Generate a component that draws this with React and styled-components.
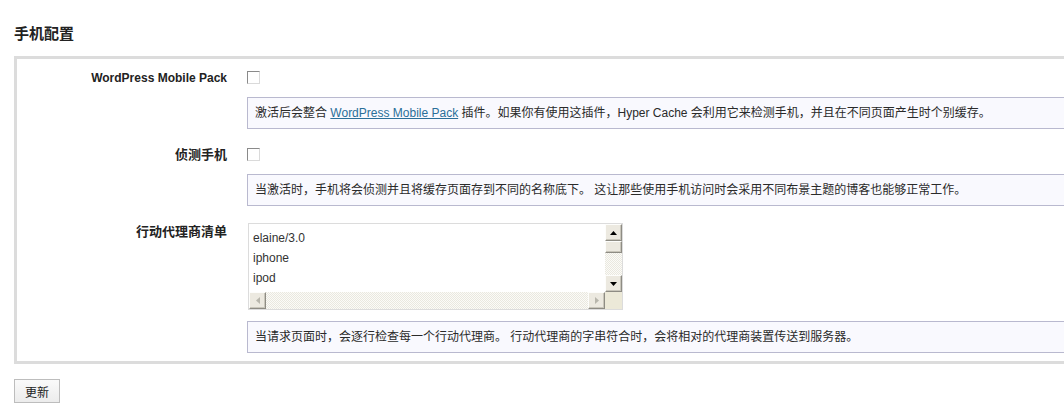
import React from "react";
import styled, { createGlobalStyle } from "styled-components";

const GlobalStyle = createGlobalStyle`
  html, body {
    margin: 0;
    padding: 0;
    background: #fff;
    overflow: hidden;
  }
  body {
    font-family: "Liberation Sans", Arial, "Noto Sans CJK SC", sans-serif;
    color: #333;
  }
`;

const agents = ["elaine/3.0", "iphone", "ipod"];

const Arrow = ({ dir, muted }) => {
  const pts = {
    up: "0,4 7,4 3.5,0",
    down: "0,0 7,0 3.5,4",
    left: "4,0 4,7 0,3.5",
    right: "0,0 0,7 4,3.5",
  }[dir];
  const vertical = dir === "up" || dir === "down";
  return (
    <svg width={vertical ? 7 : 4} height={vertical ? 4 : 7} viewBox={vertical ? "0 0 7 4" : "0 0 4 7"}>
      <polygon points={pts} fill={muted ? "#b8b6ac" : "#000"} />
    </svg>
  );
};

const App = () => {
  return (
    <>
      <GlobalStyle />
      <Page>
        <Title>手机配置</Title>
        <Panel>
          <Row>
            <Label>WordPress Mobile Pack</Label>
            <Field>
              <Check type="checkbox" />
              <Note>
                激活后会整合 <NoteLink href="#">WordPress Mobile Pack</NoteLink> 插件。如果你有使用这插件，Hyper Cache 会利用它来检测手机，并且在不同页面产生时个别缓存。
              </Note>
            </Field>
          </Row>
          <Row>
            <Label $cjk>侦测手机</Label>
            <Field>
              <Check type="checkbox" />
              <Note>当激活时，手机将会侦测并且将缓存页面存到不同的名称底下。 这让那些使用手机访问时会采用不同布景主题的博客也能够正常工作。</Note>
            </Field>
          </Row>
          <Row>
            <Label $cjk>行动代理商清单</Label>
            <Field>
              <ListBox>
                <ListText>
                  {agents.map((a) => (
                    <div key={a}>{a}</div>
                  ))}
                </ListText>
                <VBar>
                  <ScrollBtn>
                    <Arrow dir="up" />
                  </ScrollBtn>
                  <Thumb />
                  <Track />
                  <ScrollBtn>
                    <Arrow dir="down" />
                  </ScrollBtn>
                </VBar>
                <HBar>
                  <ScrollBtn>
                    <Arrow dir="left" muted />
                  </ScrollBtn>
                  <Track />
                  <ScrollBtn>
                    <Arrow dir="right" muted />
                  </ScrollBtn>
                </HBar>
                <Corner />
              </ListBox>
              <Note>当请求页面时，会逐行检查每一个行动代理商。 行动代理商的字串符合时，会将相对的代理商装置传送到服务器。</Note>
            </Field>
          </Row>
        </Panel>
        <Button>更新</Button>
      </Page>
    </>
  );
};

export default App;

const Page = styled.div`
  padding: 23px 0 0 14px;
`;

const Title = styled.h2`
  margin: 0 0 13px;
  font-size: 15px;
  line-height: 20px;
  font-weight: bold;
  color: #222;
  font-family: "Noto Sans CJK SC", sans-serif;
`;

const Panel = styled.div`
  width: 1100px;
  border: 3px solid #dcdcdc;
  background: #fff;
  padding: 10px 0 8px;
  display: flex;
  flex-direction: column;
  gap: 17px;
`;

const Row = styled.div`
  display: grid;
  grid-template-columns: 210px 1fr;
  column-gap: 20px;
`;

const Label = styled.div`
  text-align: right;
  font-weight: bold;
  font-size: ${(p) => (p.$cjk ? "13px" : "12px")};
  line-height: 16px;
  padding-top: ${(p) => (p.$cjk ? "0" : "1px")};
  color: #222;
  font-family: ${(p) =>
    p.$cjk ? '"Noto Sans CJK SC", sans-serif' : '"Liberation Sans", Arial, sans-serif'};
`;

const Field = styled.div`
  display: flex;
  flex-direction: column;
  align-items: flex-start;
`;

const Check = styled.input`
  appearance: none;
  width: 13px;
  height: 13px;
  margin: 2px 0 13px;
  background: #fff;
  border: 1px solid;
  border-color: #8a8a8a #dadada #dadada #8a8a8a;
  box-sizing: border-box;
`;

const Note = styled.div`
  align-self: stretch;
  box-sizing: border-box;
  height: 32px;
  padding: 7px 7px;
  border: 1px solid #b9b9cf;
  background: #f9f9fe;
  font-size: 12px;
  line-height: 16px;
  color: #2a2a2a;
  white-space: nowrap;
  font-family: "Liberation Sans", Arial, "Noto Sans CJK SC", sans-serif;
`;

const NoteLink = styled.a`
  color: #2a6f99;
  text-decoration: underline;
`;

const ListBox = styled.div`
  box-sizing: border-box;
  width: 375px;
  height: 87px;
  margin: 0 0 11px 1px;
  border: 1px solid #dcdcdc;
  display: grid;
  grid-template-columns: 1fr 17px;
  grid-template-rows: 1fr 17px;
  background: #fff;
`;

const ListText = styled.div`
  overflow: hidden;
  padding: 4px 4px 0;
  font-size: 12px;
  line-height: 20px;
  color: #333;
`;

const VBar = styled.div`
  display: flex;
  flex-direction: column;
  background: repeating-conic-gradient(#eae8df 0 25%, #fbfbf8 0 50%) 0 0 / 2px 2px;
`;

const HBar = styled.div`
  display: flex;
  background: repeating-conic-gradient(#eae8df 0 25%, #fbfbf8 0 50%) 0 0 / 2px 2px;
`;

const Track = styled.div`
  flex: 1;
`;

const ScrollBtn = styled.div`
  width: 17px;
  height: 17px;
  box-sizing: border-box;
  flex-shrink: 0;
  display: flex;
  align-items: center;
  justify-content: center;
  background: #ece9e0;
  border: 1px solid;
  border-color: #fdfdfb #8e8c84 #8e8c84 #fdfdfb;
  box-shadow: inset -1px -1px 0 #c9c6bb;
`;

const Thumb = styled(ScrollBtn)`
  height: 12px;
`;

const Corner = styled.div`
  background: #ece9d8;
`;

const Button = styled.button`
  margin-top: 15px;
  width: 46px;
  height: 24px;
  padding: 0;
  border: 1px solid #bdbdbd;
  background: linear-gradient(#fafafa, #ececec);
  font-size: 12px;
  color: #222;
  font-family: "Noto Sans CJK SC", sans-serif;
`;
